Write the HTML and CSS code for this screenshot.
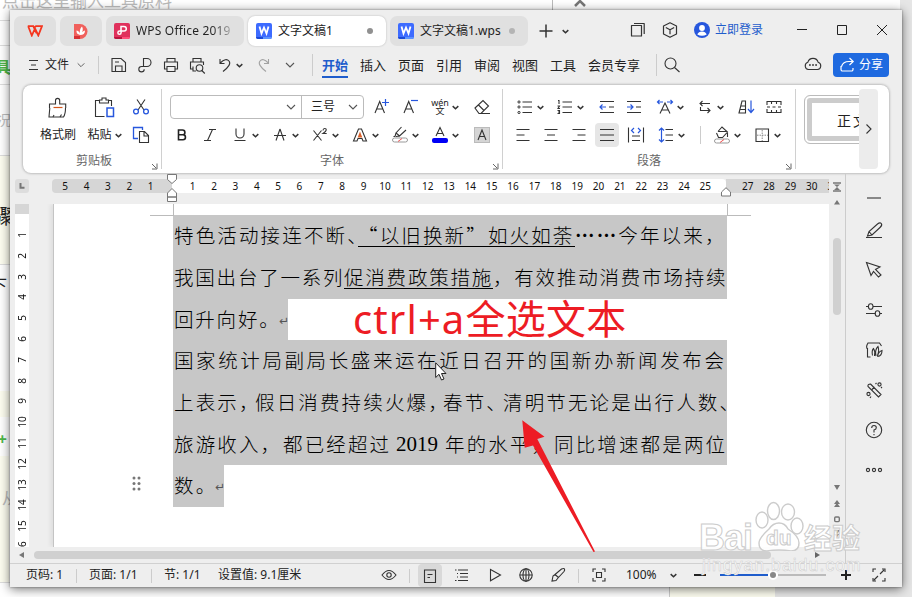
FILE: index.html
```html
<!DOCTYPE html>
<html lang="zh-CN">
<head>
<meta charset="utf-8">
<title>文字文稿1</title>
<link rel="stylesheet" href="styles.css">
</head>
<body>
<svg class="defs" aria-hidden="true">
  <symbol id="chev" viewBox="0 0 8 8"><path d="M1.500 2.800 4 5.200l2.500-2.400" fill="none" stroke="#333" stroke-width="1.300"/></symbol>
  <symbol id="thin" viewBox="0 0 12 12"><path d="M2 4l4 4 4-4" fill="none" stroke="#555" stroke-width="1.100"/></symbol>
  <symbol id="corner" viewBox="0 0 8 8"><path d="M1 2l4 4M6 1.500V7H1" fill="none" stroke="#666"/></symbol>
  <symbol id="wdoc" viewBox="0 0 16 16"><rect width="16" height="16" rx="2" fill="#3d6bff"/><path d="M0 14h7v2H2a2 2 0 0 1-2-2z" fill="#1a49d6"/><path d="M7 14h9a2 2 0 0 1-2 2H7z" fill="#5b93ff"/><path d="M3.500 3.500 5.500 10.500 8 4.500 10.500 10.500 12.500 3.500" fill="none" stroke="#fff" stroke-width="1.800"/></symbol>
</svg>

<div class="backdrop">
  <div class="bd-title">点击这里输入工具原料</div>
  <div class="bd-cream a"></div><div class="bd-cream b"></div><div class="bd-cream c"></div>
  <div class="bd-rule r1"></div><div class="bd-rule r2"></div><div class="bd-rule r3"></div><div class="bd-rule r4"></div><div class="bd-rule r5"></div><div class="bd-rule r6"></div>
  <div class="bd-text t1">工具</div><div class="bd-text t2">情况</div><div class="bd-text t3">步骤</div><div class="bd-text t4">按下</div><div class="bd-text t5">+</div><div class="bd-text t6">从</div>
  <div class="bd-top"></div><svg class="bd-up" viewBox="0 0 12 8"><path d="M1 7 6 2l5 5" fill="none" stroke="#777" stroke-width="2.500"/></svg>
  <div class="bd-side"></div><div class="bd-foot"></div><div class="bd-cream d"></div>
</div>

<main class="window">
  <header class="titlebar">
    <div class="tab small"><svg width="16" height="12" viewBox="0 0 16 12"><path d="M.8 1.200h5.500L9.500 8M1.200 1.200 4.800 10.500 8 3.500M6.500 3.500 9 1.200h6L11.300 10.500 8 3.500" fill="none" stroke="#f4361f" stroke-width="1.800"/></svg></div>
    <div class="tab small"><svg width="16" height="17" viewBox="0 0 16 17"><path d="M1 1h6a7.500 7.500 0 0 1 0 15H1z" fill="#f0605c"/><path d="M1 13h6v3H1z" fill="#d62f33"/><path d="M7 12Q3 11 3.500 7.500 7 8 7 12Q6 6 9 3.500 11 7 8 12 9 8 12 7.500 12 12 7 12" fill="#fff"/></svg></div>
    <div class="tab wide"><svg width="16" height="16" viewBox="0 0 16 16"><rect width="16" height="16" rx="2" fill="#e0315c"/><path d="M0 14h8v2H2a2 2 0 0 1-2-2z" fill="#b9153f"/><path d="M8 14h8a2 2 0 0 1-2 2H8z" fill="#ff4f7a"/><path d="M7 8V3.500h3a2.300 2.300 0 0 1 0 4.600H5.500a1.600 1.600 0 1 0 1.600 1.700V8" fill="none" stroke="#fff" stroke-width="1.500"/></svg><span class="fade">WPS Office 2019</span></div>
    <div class="tab wide current"><svg width="16" height="16"><use href="#wdoc"/></svg><span>文字文稿1</span><i class="dot"></i></div>
    <div class="tab wide"><svg width="16" height="16"><use href="#wdoc"/></svg><span>文字文稿1.wps</span><i class="dot pale"></i></div>
    <svg class="plus" width="14" height="14" viewBox="0 0 14 14"><path d="M7 .5v13M.5 7h13" stroke="#333" stroke-width="1.500"/></svg>
    <svg class="ch" width="9" height="9"><use href="#chev"/></svg>
    <div class="win-tools">
      <svg width="16" height="16" viewBox="0 0 16 16"><path d="M1.500 3.500h10v10.500h-10zM4 1.500h10.200V12" fill="none" stroke="#333" stroke-width="1.200" stroke-linejoin="round"/></svg>
      <svg width="16" height="16" viewBox="0 0 16 16"><path d="M8 .8 14.500 4v8L8 15.300 1.500 12V4zM3.800 5.500 8 7.700l4.200-2.200M8 7.700v4.500" fill="none" stroke="#333" stroke-width="1.200" stroke-linejoin="round"/></svg>
      <div class="login"><svg width="16" height="16" viewBox="0 0 16 16"><circle cx="8" cy="8" r="8" fill="#2757dd"/><circle cx="8" cy="6" r="2.900" fill="#fff"/><path d="M3.300 12.500Q4.500 9.500 8 9.500t4.700 3Q8 15 3.300 12.500" fill="#fff"/></svg><span>立即登录</span></div>
      <svg width="12" height="12" viewBox="0 0 12 12"><path d="M1 5.500h10" stroke="#222" stroke-width="1"/></svg>
      <svg width="12" height="12" viewBox="0 0 12 12"><path d="M1.500 1.500h9v9h-9z" fill="none" stroke="#222"/></svg>
      <svg width="12" height="12" viewBox="0 0 12 12"><path d="M1 1l10 10M11 1 1 11" stroke="#222"/></svg>
    </div>
  </header>

  <nav class="menubar">
    <div class="file"><svg width="10" height="12" viewBox="0 0 10 12"><path d="M0 1.500h9M2 6h5M0 10.500h9" stroke="#333" stroke-width="1.100"/></svg><span>文件</span><svg width="10" height="10"><use href="#thin"/></svg></div>
    <div class="quick">
      <svg width="20" height="20" viewBox="0 0 20 20"><path d="M3 3.500h9l4.500 4V16.500H3zM6 7h4M6.500 16v-5h6.500v5" class="ln"/></svg>
      <svg width="20" height="20" viewBox="0 0 20 20"><path d="M8.500 12V3.500h3.500a4 4 0 0 1 0 8H6.500a2.700 2.700 0 1 0 2.700 2.700" class="ln"/></svg>
      <svg width="20" height="20" viewBox="0 0 20 20"><path d="M6 7V3.500h8V7M6 14H3.500V7h13v7H14M6 11.500h8V16.500H6z" class="ln"/></svg>
      <svg width="20" height="20" viewBox="0 0 20 20"><path d="M6 7V3.500h8V7M5.500 14H3.500V7h13v3M6 11.500V16h3M14.800 15.500l3 3" class="ln"/><circle cx="12.500" cy="13" r="3.300" class="ln"/></svg>
      <svg class="undo" width="20" height="20" viewBox="0 0 20 20"><path d="M5 4v4.500h4.500M5.200 8Q11 2.500 14 6t-6 10.500" class="ln"/></svg>
      <svg width="9" height="9"><use href="#chev"/></svg>
      <svg class="redo" width="20" height="20" viewBox="0 0 20 20"><path d="M14.500 4v4.500H10M14.300 8Q9 2.500 6 6t6 10.500" class="ln"/></svg>
      <svg width="12" height="12"><use href="#thin"/></svg>
    </div>
    <div class="menus"><span class="on">开始</span><span>插入</span><span>页面</span><span>引用</span><span>审阅</span><span>视图</span><span>工具</span><span>会员专享</span></div>
    <svg class="search" width="18" height="18" viewBox="0 0 18 18"><circle cx="7.500" cy="7.500" r="5.500" class="ln"/><path d="M11.500 11.500 16.500 16" class="ln"/></svg>
    <svg class="cloud" width="18" height="16" viewBox="0 0 18 16"><path d="M4.500 13.500a3.700 3.700 0 0 1-.7-7.200 5.400 5.400 0 0 1 10.400 0 3.700 3.700 0 0 1-.7 7.200z" class="ln"/><path d="M5 9h1.800M8.100 9h1.800M11.200 9H13" stroke="#333" stroke-width="1.600"/></svg>
    <div class="share"><svg width="16" height="16" viewBox="0 0 16 16"><path d="M2 9v3.500a1.500 1.500 0 0 0 1.500 1.500h9a1.500 1.500 0 0 0 1.500-1.500V11M2.500 9.500Q4 4.500 10 4.500h4M10.500 1l3.700 3.500-3.700 3.500" fill="none" stroke="#fff" stroke-width="1.200"/></svg><span>分享</span></div>
  </nav>

  <section class="ribbon">
    <div class="group clip">
      <div class="clip-body">
        <div class="big"><svg width="24" height="24" viewBox="0 0 24 24"><path d="M3.500 12V8h6V4.500a2 2 0 0 1 4.200 0V8h6v4M3.800 12 3 21h14.500q2-3 2-9" class="ln"/><path d="M7.500 11.500h9" stroke="#d3571d" stroke-width="1.200"/><path d="M7 21l1-2M14 21l1.500-2.500" class="ln"/></svg><span>格式刷</span></div>
        <div class="big"><svg width="24" height="24" viewBox="0 0 24 24"><path d="M7 4.500H2.500v16h9M15 4.500h3.500V10M6.500 4h2.500V2h4v2h2.500v3h-9z" class="ln"/><path d="M14 12h6.500v8.500H14z" fill="none" stroke="#2757dd" stroke-width="1.500"/></svg><span>粘贴<svg width="9" height="9"><use href="#chev"/></svg></span></div>
        <div class="stack">
          <svg width="18" height="18" viewBox="0 0 18 18"><path d="M5 1.500l7 10.500M13 1.500 6 12" class="ln"/><g fill="none" stroke="#2757dd" stroke-width="1.300"><circle cx="4" cy="13.500" r="2.400"/><circle cx="14" cy="13.500" r="2.400"/></g></svg>
          <svg width="18" height="18" viewBox="0 0 18 18"><path d="M6 12.500H1.500V1.500h9V4" fill="none" stroke="#2757dd" stroke-width="1.300"/><path d="M7.500 5.500h5l4 4v7h-9zM12 5.500V10h4.500" class="ln"/></svg>
        </div>
      </div>
      <div class="label">剪贴板<svg width="8" height="8"><use href="#corner"/></svg></div>
    </div>

    <div class="group font">
      <div class="row">
        <div class="combo"><div class="name"><svg width="12" height="12"><use href="#thin"/></svg></div><div class="size">三号<svg width="12" height="12"><use href="#thin"/></svg></div></div>
        <svg class="i ml6" viewBox="0 0 24 24"><path d="M5 18 9.700 6.500 14.500 18M6.500 14h6.500" class="ln"/><path d="M15.500 4v7M12 7.500h7" class="bl"/></svg>
        <svg class="i ml5" viewBox="0 0 24 24"><path d="M5 18 9.700 6.500 14.500 18M6.500 14h6.500" class="ln"/><path d="M12 5.500h7" class="bl"/></svg>
        <div class="split ml5"><span class="wen"><b>wén</b><b>文</b></span><svg class="c"><use href="#chev"/></svg></div>
        <svg class="i ml10" viewBox="0 0 24 24"><path d="M5 13 13 5.500l5.500 5.500-7.500 7.500H9zM8.500 10l5.500 5.500M9 18.500h11" class="ln"/></svg>
      </div>
      <div class="row">
        <svg class="i" viewBox="0 0 24 24"><path d="M8.500 7h4a2.400 2.400 0 0 1 0 4.800H8.500zM8.500 11.800h4.500a2.400 2.400 0 0 1 0 4.900H8.500z" fill="none" stroke="#222" stroke-width="1.600"/></svg>
        <svg class="i ml4" viewBox="0 0 24 24"><path d="M11 6.500h7M6 17.500h7M14.500 6.500 9.500 17.500" class="ln"/></svg>
        <div class="split ml6"><svg class="i" viewBox="0 0 24 24"><path d="M8 5.500v5.500a4 4 0 0 0 8 0V5.500M6.500 17.500h11" class="ln"/></svg><svg class="c"><use href="#chev"/></svg></div>
        <div class="split ml8"><svg class="i" viewBox="0 0 24 24"><path d="M12 6 8 17.500M12 6l4 11.500M6 12.500h12" class="ln"/></svg><svg class="c"><use href="#chev"/></svg></div>
        <div class="split ml8"><svg class="i" viewBox="0 0 24 24"><path d="M5.500 7.500l8 10M13.500 7.500l-8 10M15 7.500q0-2 1.700-2t1.500 1.700Q18 8.500 15 10.500h3.700" class="ln"/></svg><svg class="c"><use href="#chev"/></svg></div>
        <div class="split ml8"><svg class="i" viewBox="0 0 24 24"><path d="M5.500 18 10.500 6h3l5 12H15l-1-2.500h-4L9 18z" class="ln"/><path d="M12 8.500l2.300 6H9.700z" fill="#d9622b"/></svg><svg class="c"><use href="#chev"/></svg></div>
        <div class="split ml8"><svg class="i" viewBox="0 0 24 24"><path d="M13.500 4 8 10l3.500 3 6.500-6M8 10l-1 3.500H5.500M11.500 13 8 13.500" class="ln"/><rect x="4.500" y="15" width="15" height="4" rx="2" fill="#fff" stroke="#999"/><path d="M10 18.500l4-3" stroke="#e55"/></svg><svg class="c"><use href="#chev"/></svg></div>
        <div class="split ml8"><svg class="i" viewBox="0 0 24 24"><path d="M8 13 12 4.500 16 13M9.300 10.500h5.400" class="ln"/><rect x="4" y="15" width="16" height="5" rx="2" fill="#0000f5"/></svg><svg class="c"><use href="#chev"/></svg></div>
        <svg class="i ml10" viewBox="0 0 24 24"><rect x="4.500" y="4.500" width="15" height="15" fill="#d5d5d5" stroke="#bbb"/><path d="M8 17l4-10 4 10M9.300 13.500h5.400" class="ln"/></svg>
      </div>
      <div class="label">字体<svg width="8" height="8"><use href="#corner"/></svg></div>
    </div>

    <div class="group para">
      <div class="row r1">
        <div class="split"><svg class="i" viewBox="0 0 24 24"><path d="M9.500 7h9.500M9.500 12h9.500M9.500 17.500h9.500" class="ln"/><g fill="none" stroke="#333"><circle cx="6" cy="7" r="1.100"/><circle cx="6" cy="12" r="1.100"/><circle cx="6" cy="17.500" r="1.100"/></g></svg><svg class="c"><use href="#chev"/></svg></div>
        <div class="split ml8"><svg class="i" viewBox="0 0 24 24"><path d="M9.500 7h9.500M9.500 12h9.500M9.500 17.500h9.500M5 5.500h1V9M4.500 11h2l-1.500 2.500h2M4.500 15.500H6.500v3h-2M5 17h1.500" class="ln"/></svg><svg class="c"><use href="#chev"/></svg></div>
        <svg class="i ml10" viewBox="0 0 24 24"><path d="M5 6.500h14M14 12h5M5 17.500h14" class="ln"/><path d="M11 12H5M7.500 9.500 5 12l2.500 2.500" class="bl"/></svg>
        <svg class="i ml3" viewBox="0 0 24 24"><path d="M5 6.500h14M14 12h5M5 17.500h14" class="ln"/><path d="M5 12h6M8.500 9.500 11 12l-2.500 2.500" class="bl"/></svg>
        <div class="split ml7"><svg class="i" viewBox="0 0 24 24"><path d="M7 18.500 12 8l5 10.500M8.500 15h7" class="ln"/><path d="M4.500 7H10M14 7h5.500M6.500 5l-2 2 2 2M17.500 5l2 2-2 2" class="bl"/></svg><svg class="c"><use href="#chev"/></svg></div>
        <div class="split ml8"><svg class="i" viewBox="0 0 24 24"><path d="M17 8.500H7M9.500 6 7 8.500 9.500 11M7.500 12v3.500H17M14.500 13l2.500 2.500-2.500 2.500" class="ln"/></svg><svg class="c"><use href="#chev"/></svg></div>
        <svg class="i ml10" viewBox="0 0 24 24"><path d="M4 18 7 6h3.500v12zM6 11h4M5.500 14.500H10" class="ln"/><path d="M16 5.500V17M13 14l3 3.500 3-3.500" class="bl"/></svg>
        <svg class="i ml3" viewBox="0 0 24 24"><path d="M5 10V6.500h14V10M5 14v3.500h14V14M9.500 6.500V9M14.500 6.500V9M9.500 15v2.500M14.500 15v2.500M5 12h3M10.500 12h3M16 12h3" class="ln"/></svg>
      </div>
      <div class="row r2">
        <svg class="i" viewBox="0 0 24 24"><path d="M5.500 6.500h13M5.500 12h8M5.500 17.500h13" class="ln"/></svg>
        <svg class="i ml4" viewBox="0 0 24 24"><path d="M5.500 6.500h13M8 12h8M5.500 17.500h13" class="ln"/></svg>
        <svg class="i ml4" viewBox="0 0 24 24"><path d="M5.500 6.500h13M10.500 12h8M5.500 17.500h13" class="ln"/></svg>
        <svg class="i ml4 pressed" viewBox="0 0 24 24"><path d="M5 6.500h14M5 12h14M5 17.500h14" class="ln"/></svg>
        <svg class="i ml5" viewBox="0 0 24 24"><path d="M4.500 4.500v15M19.500 4.500v15M8 13h8M8 17.500h8" class="ln"/><path d="M10 5 7.500 7.500 10 10M14 5l2.500 2.500L14 10" class="bl"/></svg>
        <div class="split ml6"><svg class="i" viewBox="0 0 24 24"><path d="M11.500 6.500H19M11.500 12H19M11.500 17.500H19" class="ln"/><path d="M7.500 5v14M5 7.500 7.500 5 10 7.500M5 16.500 7.500 19l2.500-2.500" class="bl"/></svg><svg class="c"><use href="#chev"/></svg></div>
        <i class="vsep"></i>
        <div class="split ml9"><svg class="i" viewBox="0 0 24 24"><path d="M8 8.500 12 4l5.500 5-5 5.500H8.500L6.500 10M8 8.500h9M17.500 10v4" class="ln"/><rect x="4.500" y="16" width="15" height="4" rx="2" fill="#fff" stroke="#999"/><path d="M10 19.500l4-3" stroke="#e55"/></svg><svg class="c"><use href="#chev"/></svg></div>
        <div class="split ml8"><svg class="i" viewBox="0 0 24 24"><path d="M6 6h12.500v12.500H6z" class="ln"/><path d="M12.200 7v11M7 12.200h11" stroke="#888" stroke-dasharray="1.500 1"/></svg><svg class="c"><use href="#chev"/></svg></div>
      </div>
      <div class="label">段落<svg width="8" height="8"><use href="#corner"/></svg></div>
    </div>

    <div class="styles"><div class="clipper"><div class="card">正文</div></div><div class="more"><svg width="8" height="12" viewBox="0 0 8 12"><path d="M1.500 1.500 6 6 1.500 10.500" class="ln"/></svg></div></div>
  </section>

  <section class="work">
    <div class="editor">
      <div class="hruler">
        <span class="tabsel"><svg width="14" height="14" viewBox="0 0 14 14"><path d="M5.500 4v4.800h4" fill="none" stroke="#777" stroke-width="2"/></svg></span>
        <div class="hr-left"><b>5</b><b>4</b><b>3</b><b>2</b><b>1</b></div>
        <div class="hr-mid"><b>1</b><b>2</b><b>3</b><b>4</b><b>5</b><b>6</b><b>7</b><b>8</b><b>9</b><b>10</b><b>11</b><b>12</b><b>13</b><b>14</b><b>15</b><b>16</b><b>17</b><b>18</b><b>19</b><b>20</b><b>21</b><b>22</b><b>23</b><b>24</b><b>25</b></div>
        <div class="hr-right"><b>27</b><b>28</b><b>29</b><b>30</b><b>31</b></div>
        <svg class="split-mark" width="8" height="10" viewBox="0 0 8 10"><path d="M0 1h8M0 9h8" stroke="#777" stroke-width="1.400"/><path d="M1 2.500h6L4 5zM1 8l3-3 3 3z" fill="#777"/></svg>
        <svg class="indent-l" width="12" height="30" viewBox="0 0 12 30"><path d="M1.500.5h9v5L6 9.500l-4.500-4zM1.500 19 6 14.500l4.500 4.500v4h-9zM1.500 23h9v4.500h-9z" fill="#fff" stroke="#777"/></svg>
        <svg class="indent-r" width="12" height="10" viewBox="0 0 12 10"><path d="M1.500 5 6 .7 10.500 5v4h-9z" fill="#fff" stroke="#777"/></svg>
      </div>
      <div class="docrow">
        <div class="vruler"><b>1</b><b>2</b><b>3</b><b>4</b><b>5</b><b>6</b><b>7</b><b>8</b><b>9</b><b>10</b><b>11</b><b>12</b><b>13</b><b>14</b><b>15</b><b>16</b></div>
        <article class="page">
          <i class="mark ml"></i><i class="mark mr"></i>
          <div class="line"><span class="w185">特色活动接连不断、</span><u class="w217">“以旧换新”如火如荼</u><span><strong>……</strong>今年以来，</span></div>
          <div class="line tight"><span class="w171">我国出台了一系列</span><u class="w149">促消费政策措施</u><span>，有效推动消费市场持续</span></div>
          <div class="line tight short l3"><span class="w107">回升向好。</span><i class="ret">↵</i></div>
          <div class="line loose">国家统计局副局长盛来运在近日召开的国新办新闻发布会</div>
          <div class="line"><span class="w82">上表示，</span><span class="w188">假日消费持续火爆，</span><span class="w60">春节、</span><span>清明节无论是出行人数、</span></div>
          <div class="line l6"><span class="w109">旅游收入，</span><span class="w114">都已经超过</span><em>2019</em><span class="w109">年的水平，</span><span>同比增速都是两位</span></div>
          <div class="line short l7"><span class="w43">数。</span><i class="ret">↵</i></div>
          <svg class="grip" width="10" height="16" viewBox="0 0 10 16"><g fill="#777"><circle cx="2" cy="2" r="1.500"/><circle cx="7" cy="2" r="1.500"/><circle cx="2" cy="7.500" r="1.500"/><circle cx="7" cy="7.500" r="1.500"/><circle cx="2" cy="13" r="1.500"/><circle cx="7" cy="13" r="1.500"/></g></svg>
        </article>
        <div class="vscroll">
          <svg width="6" height="5" viewBox="0 0 6 5"><path d="M3 0 6 4.500H0z" fill="#777"/></svg>
          <div class="thumb"></div>
          <svg class="nav" width="8" height="54" viewBox="0 0 8 54"><g fill="#777"><path d="M1 1h6L4 6zM4 16 7 20H1zM4 19 7 23H1zM1 50h6v-1L4 53zM1 46h6l-3 4z"/></g><rect x="1.700" y="33" width="4.600" height="4.600" rx="1" fill="none" stroke="#777" stroke-width="1.400"/></svg>
        </div>
      </div>
      <div class="hscroll"><svg width="5" height="6" viewBox="0 0 5 6"><path d="M0 3 5 0v6z" fill="#777"/></svg><div class="hthumb"></div><svg width="5" height="6" viewBox="0 0 5 6"><path d="M5 3 0 0v6z" fill="#666"/></svg></div>
    </div>
    <aside class="side">
      <svg width="20" height="10" viewBox="0 0 20 10"><path d="M3 5h14" stroke="#888" stroke-width="2"/></svg>
      <svg viewBox="0 0 20 20"><path d="M2 17.500h16M3.500 16l1.500-4.500L13.500 4Q16 2 17.300 3.500T16 7.500L8 15zM5 11.500l3 3.500" class="ln"/></svg>
      <svg viewBox="0 0 20 20"><path d="M2.500 2.500 16 7l-4.500 2.500 5.500 5.500-2.500 2-5-5.500L7 15.500z" class="ln"/></svg>
      <svg viewBox="0 0 20 20"><path d="M2 6.500h2.500M9 6.500h9M2 13.500h9.500M16 13.500h2" class="ln"/><ellipse cx="6.700" cy="6.500" rx="2.300" ry="2.800" class="ln"/><ellipse cx="13.500" cy="13.500" rx="2.300" ry="2.800" class="ln"/></svg>
      <svg viewBox="0 0 20 20"><path d="M3.500 8v9h3M3.500 9Q1.500 7 4 3h11.500l2 3" class="ln"/><path d="M8.500 15.500Q7.500 10.500 9.500 8.500q2 3 1 7.500M12 16Q10.500 10 14 6.500q1.500 4-.5 9M13.500 16.500Q14 12 18 10.500q0 5.500-4.500 6" class="ln"/></svg>
      <svg viewBox="0 0 20 20"><path d="M6.500 4 17 14.500 14.500 17 4 6.500q-.5-2.500 2.500-2.500zM8 9.500 10.500 7" class="ln"/><circle cx="15.500" cy="4.500" r="1.600" class="ln"/><circle cx="4.500" cy="14" r="1.600" class="ln"/><path d="M11.500 4l1-1M17 8l1-1M7 16.500l-1 1.500" class="ln"/></svg>
      <svg viewBox="0 0 20 20"><circle cx="10" cy="10" r="7.700" class="ln"/><path d="M7.700 8q0-2.500 2.300-2.500t2.300 2.200Q12.300 9.500 10 10v2.500M10 14v1.300" class="ln"/></svg>
      <svg viewBox="0 0 20 20"><g class="ln"><circle cx="4" cy="10" r="1.600"/><circle cx="10" cy="10" r="1.600"/><circle cx="16" cy="10" r="1.600"/></g></svg>
    </aside>
  </section>

  <footer class="status">
    <span>页码: 1</span><i></i><span>页面: 1/1</span><i></i><span>节: 1/1</span><span>设置值: 9.1厘米</span>
    <svg class="m" viewBox="0 0 20 20"><path d="M3 10q7-9 14 0-7 9-14 0z" class="ln"/><circle cx="10" cy="10" r="2.200" class="ln"/></svg>
    <i class="m"></i>
    <div class="view m"><svg viewBox="0 0 20 20"><path d="M4.500 4h11v12.500h-11zM7.500 8.500h5M7.500 11.500H10" class="ln"/></svg></div>
    <svg class="m" viewBox="0 0 20 20"><path d="M7 5h10M9 8.500h8M9 12h8M7 15.500h10M4 5h1.500M4 15.500h1.500M6 8.500h1M6 12h1" class="ln"/></svg>
    <svg class="m" viewBox="0 0 20 20"><path d="M5.500 4.500 15.500 10l-10 5.800z" class="ln"/></svg>
    <svg class="m" viewBox="0 0 20 20"><circle cx="10" cy="10" r="6.200" class="ln"/><ellipse cx="10" cy="10" rx="3" ry="6.200" class="ln"/><path d="M3.800 10h12.400M10 3.800v12.400" class="ln"/></svg>
    <svg class="m" viewBox="0 0 20 20"><path d="M4 16l1-5 2-1.500L13.500 4q2.500-1 3 0T16 6.500L10 13l-2 2.500zM7 9.500l3.500 3" class="ln"/></svg>
    <i class="m"></i>
    <svg class="m" viewBox="0 0 20 20"><path d="M4 7V4h3M13 4h3v3M16 13v3h-3M7 16H4v-3M7.500 7.500h5v5h-5z" class="ln"/></svg>
    <b></b><span>100%</span>
    <svg class="m ch" viewBox="0 0 8 8"><use href="#chev"/></svg>
    <svg class="m" viewBox="0 0 20 20"><path d="M4 10h12" stroke="#222" stroke-width="2"/></svg>
    <b></b>
    <div class="slider"><div class="fill"></div><div class="knob"></div><div class="rest"></div></div>
    <svg class="m" viewBox="0 0 20 20"><path d="M10 5v10M5 10h10" stroke="#222" stroke-width="2"/></svg>
    <svg class="m" viewBox="0 0 20 20"><path d="M4 7V4h3M16 13v3h-3M4 13v3h3M13 4h3v3M5 15l4-4M15 5l-4 4" class="ln"/></svg>
  </footer>
</main>

<div class="note">ctrl+a<span>全选文本</span></div>
<svg class="arrow" width="76" height="136" viewBox="520 418 76 136"><path d="M522.300 420.300 544.500 436.700 537.300 439 595 551.500 593.500 552 533 445.500 524.700 447.700z" fill="#ed1c24"/></svg>
<svg class="cursor" width="14" height="20" viewBox="0 0 14 20"><path d="M.7.800V15.500L4 12.300 6.500 18 9 17 6.500 11.500H11z" fill="#fff" stroke="#222"/></svg>
<div class="mark-paw"><svg width="52" height="52" viewBox="0 0 52 52"><g fill="#fff" fill-opacity=".85" stroke="#ccc" stroke-width="1.400"><ellipse cx="8" cy="21" rx="6" ry="8"/><ellipse cx="19.500" cy="12" rx="6" ry="8.500"/><ellipse cx="34" cy="13" rx="6.500" ry="8"/><ellipse cx="43" cy="27" rx="6" ry="8"/><path d="M25 24q6 0 9 6 11 7 11 14 0 8-8 8-12-2-24 0-8 0-8-8 0-5 10-14 4-6 10-6z"/></g></svg></div>
<div class="wm bai">Bai</div><div class="wm du">du</div><div class="wm jy">经验</div><div class="wm url">jingyan.baidu.com</div>
</body>
</html>
```
FILE: styles.css
```css
* { box-sizing: border-box; }
body { margin: 0; width: 912px; height: 597px; overflow: hidden; position: relative; background: #fff; color: #222; font: 12px/16px "Noto Sans", "Noto Sans CJK SC", sans-serif; }
svg { display: block; flex: none; }
i { font-style: normal; }
.defs { position: absolute; width: 0; height: 0; }
.ln { fill: none; stroke: #333; stroke-width: 1.1; }
.bl { fill: none; stroke: #2757dd; stroke-width: 1.2; }

/* page behind the window */
.backdrop { position: absolute; inset: 0; overflow: hidden; }
.backdrop > * { position: absolute; }
.bd-title { left: 2px; top: -10px; font-size: 17px; line-height: 22px; color: #bbb; white-space: nowrap; }
.bd-cream { left: 0; width: 12px; background: #fdfdf0; }
.bd-cream.a { top: 156px; height: 108px; }
.bd-cream.b { top: 391px; height: 26px; }
.bd-cream.c { top: 456px; height: 126px; }
.bd-cream.d { left: 669px; top: 580px; width: 106px; height: 17px; border-left: 1px solid #ccc; }
.bd-rule { left: 0; width: 12px; height: 1px; background: #ddd; }
.bd-rule.r1 { top: 20px; } .bd-rule.r2 { top: 45px; } .bd-rule.r3 { top: 84px; } .bd-rule.r4 { top: 155px; } .bd-rule.r5 { top: 264px; } .bd-rule.r6 { top: 582px; }
.bd-text { right: 901px; white-space: nowrap; font-size: 16px; line-height: 20px; }
.t1 { top: 57px; color: #4db648; font-weight: 700; }
.t2 { top: 110px; color: #bbb; font-size: 14px; }
.t3 { top: 207px; font-size: 20px; right: 899px; }
.t4 { top: 275px; right: 905px; }
.t5 { top: 429px; color: #4db648; right: 905px; font-weight: 700; }
.t6 { top: 488px; color: #bbb; right: 894px; }
.bd-top { left: 552px; top: 0; width: 1px; height: 12px; background: #bbb; }
.bd-up { left: 574px; top: -1px; width: 12px; height: 8px; }
.bd-side { right: 0; top: 0; width: 12px; height: 597px; background: #e6e6e6; }
.bd-foot { right: 0; top: 580px; width: 137px; height: 17px; background: #e6e6e6; }

.window { position: relative; margin: 10px; width: 892px; height: 577px; display: flex; flex-direction: column; background: #eee; box-shadow: 0 2px 10px rgba(0,0,0,.55), 0 0 2px rgba(0,0,0,.4); }

.titlebar { height: 41px; padding: 6px 0 0 4px; display: flex; align-items: flex-start; }
.tab { height: 30px; margin-right: 4px; border-radius: 7px; background: #e0e0e0; display: flex; align-items: center; font-size: 12px; white-space: nowrap; }
.tab.small { width: 42px; justify-content: center; }
.tab.wide { width: 138px; padding-left: 8px; gap: 6px; }
.tab.current { background: #fff; box-shadow: 0 0 2px rgba(0,0,0,.25); }
.fade { letter-spacing: .18px; background: linear-gradient(90deg, #222 80%, #aaa); -webkit-background-clip: text; color: transparent; }
.dot { width: 6px; height: 6px; border-radius: 50%; background: #909090; margin-left: auto; margin-right: 13px; }
.dot.pale { background: #b4b4b4; }
.plus { margin: 8px 8px 0 7px; }
.ch { margin-top: 11px; }
.win-tools { flex: 1; display: grid; grid-template-columns: 32px 32px 96px 40px 40px 40px; justify-content: end; justify-items: center; align-items: center; height: 28px; }
.login { display: flex; align-items: center; gap: 5px; margin-left: 8px; justify-self: start; color: #1f5dcc; white-space: nowrap; }

.menubar { height: 34px; display: flex; position: relative; }
.menubar > * { margin-top: 4px; height: 22px; }
.menubar .file { display: flex; align-items: center; padding-left: 19px; width: 89px; border-right: 1px solid #ccc; height: 18px; margin-top: 5px; }
.file span { margin: 0 7px 0 6px; }
.menubar .quick { display: flex; align-items: center; width: 214px; padding-left: 10px; gap: 6px; border-right: 1px solid #ccc; margin-top: 3px; }
.quick .undo { margin-left: 2px; }
.quick .undo + svg { margin-left: -6px; }
.quick .redo { opacity: .4; margin: 0 4px 0 4px; }
.menubar .menus { display: flex; gap: 12px; padding: 0 12px 0 9px; width: 344px; border-right: 1px solid #ccc; font-size: 13px; line-height: 22px; white-space: nowrap; margin-top: 3px; }
.menus .on { color: #1f5dcc; font-weight: 700; height: 24px; border-bottom: 2px solid #1f5dcc; }
.menubar .search { margin: 5px 0 0 6px; height: 18px; }
.menubar .share { margin: 2px 13px 0 11px; width: 56px; height: 24px; border-radius: 4px; background: #1f6ae0; color: #fff; display: flex; align-items: center; padding-left: 6px; gap: 4px; }
.menubar .cloud { margin: 5px 0 0 auto; height: 16px; }

.ribbon { height: 88px; margin: 0 13px; display: flex; background: #fff; border-radius: 8px; box-shadow: 0 0 3px rgba(0,0,0,.4); }
.group { border-right: 1px solid #d0d0d0; margin: 4px 0; height: 80px; position: relative; }
.clip { width: 139px; } .font { width: 341px; } .para { width: 293px; }
.label { position: absolute; left: 0; right: 0; top: 64px; text-align: center; color: #666; }
.clip .label { left: 4px; }
.label svg { position: absolute; right: 2px; top: 9px; }
.clip-body { display: grid; grid-template-columns: 48px 46px 30px; padding-left: 11px; }
.big { display: flex; flex-direction: column; align-items: center; padding-top: 7px; gap: 7px; white-space: nowrap; }
.big span { display: flex; align-items: center; gap: 2px; }
.stack { display: flex; flex-direction: column; align-items: center; padding: 9px 4px 0 0; gap: 10px; }
.row { display: flex; align-items: center; height: 28px; }
.font { padding: 4px 0 0 8px; }
.font .row + .row { margin-left: -.5px; }
.para { padding: 4px 0 0 10px; }
.para .r2 { margin-left: -2.5px; }
.i { width: 24px; height: 24px; }
.c { width: 9px; height: 9px; }
.split { width: 32px; height: 24px; display: flex; align-items: center; flex: none; }
.split .c { margin-left: -1px; }
.ml3 { margin-left: 3px; } .ml4 { margin-left: 4px; } .ml5 { margin-left: 5px; } .ml6 { margin-left: 6px; } .ml7 { margin-left: 7px; } .ml8 { margin-left: 8px; } .ml9 { margin-left: 9px; } .ml10 { margin-left: 10px; }
.pressed { background: #e6e6e6; border-radius: 4px; }
.vsep { width: 1px; height: 18px; background: #ccc; margin-left: 14px; }
.combo { width: 194px; height: 24px; border: 1px solid #bbb; border-radius: 4px; display: flex; }
.name { width: 131px; border-right: 1px solid #bbb; display: flex; align-items: center; justify-content: flex-end; padding-right: 4px; }
.size { flex: 1; display: flex; align-items: center; justify-content: space-between; padding: 0 4px 0 9px; }
.wen { width: 24px; display: flex; flex-direction: column; align-items: center; font-size: 9px; line-height: 8px; }
.wen b { font-weight: 400; }
.styles { flex: 1; display: flex; padding: 4px 11px 4px 8px; }
.clipper { width: 55px; overflow: hidden; padding-top: 6px; }
.card { width: 100px; height: 49px; border: 1px solid #bbb; border-radius: 6px; box-shadow: inset 0 0 0 2px #fff, inset 0 0 0 7px #ccc; font: 14px/48px "Noto Sans CJK SC", sans-serif; letter-spacing: 2px; padding-left: 32px; }
.more { width: 19px; height: 80px; background: #ececec; border-radius: 4px; display: flex; align-items: center; justify-content: center; flex: none; }

.work { display: flex; height: 390px; }
.editor { width: 835px; }
.hruler { height: 31px; display: flex; padding: 6px 0 0 5px; position: relative; }
.hruler b, .vruler b { font: 400 10px/14px "Noto Sans", sans-serif; color: #111; text-align: center; flex: none; }
.tabsel { width: 14px; height: 14px; background: #ddd; border-radius: 3px; margin-right: 23px; }
.hr-left, .hr-mid, .hr-right { display: flex; height: 14px; overflow: hidden; background: #d6d6d6; }
.hr-left { width: 120px; padding-left: 2.5px; border-radius: 4px 0 0 4px; }
.hruler b { width: 21.36px; }
.hr-mid { width: 554px; background: #fff; padding-left: 10px; border-radius: 0 4px 0 0; }
.hr-right { width: 103px; padding-left: 11px; }
.split-mark { margin: 3px 0 0 4px; }
.indent-l { position: absolute; left: 156px; top: 1px; }
.indent-r { position: absolute; left: 710px; top: 14px; }
.docrow { height: 343px; display: flex; padding-left: 5px; }
.vruler { width: 14px; background: #fff; border-top: 10px solid #d6d6d6; padding-top: 11px; overflow: hidden; display: flex; flex-direction: column; margin-right: 24px; }
.vruler b { width: 14px; height: 20.8px; line-height: 14px; writing-mode: vertical-rl; transform: rotate(180deg); }
.page { position: relative; width: 776px; background: #fff; border-left: 1px solid #c4c4c4; box-shadow: -3px 0 4px rgba(0,0,0,.06); padding: 11px 0 0 119px; font-family: "Noto Sans CJK SC", sans-serif; font-size: 19.5px; font-weight: 300; color: #000; clip-path: inset(0 0 0 -8px); }
.line { width: 554px; height: 42px; line-height: 39px; background: #c7c7c7; white-space: nowrap; display: flex; letter-spacing: 2.15px; padding-left: 1px; text-spacing-trim: space-all; }
.line > * { flex: none; }
.tight { letter-spacing: 1.8px; }
.loose { letter-spacing: 2.6px; }
.l3, .l6 { height: 41px; }
.short.l3 { width: 115px; } .short.l7 { width: 51px; }
.line u { text-decoration: none; height: 32px; border-bottom: 1px solid #000; }
.line strong { font-weight: 700; }
.w185 { width: 184px; } .w217 { width: 217px; } .w171 { width: 170px; } .w149 { width: 149px; } .w107 { width: 105px; } .w82 { width: 81px; } .w188 { width: 188px; } .w60 { width: 60px; } .w109 { width: 109px; } .w114 { width: 113px; } .w43 { width: 41px; }
.line em { font: 400 21px/41px "Liberation Serif", serif; letter-spacing: 0; width: 49px; }
.ret { font: 400 12px/45px "DejaVu Sans", sans-serif; color: #555; letter-spacing: 0; }
.mark { position: absolute; top: 0; width: 24px; height: 12px; border-bottom: 1px solid #bbb; }
.mark.ml { left: 96px; border-right: 1px solid #bbb; margin: 0; }
.mark.mr { left: 673px; border-left: 1px solid #bbb; }
.grip { position: absolute; left: 78px; top: 272px; }
.vscroll { width: 16px; height: 343px; display: flex; flex-direction: column; align-items: center; margin-top: -4px; }
.thumb { width: 8px; height: 77px; border-radius: 4px; background: #d0d0d0; margin-top: 33px; }
.nav { margin-top: 169px; }
.hscroll { height: 16px; display: flex; align-items: center; padding-left: 9px; }
.hthumb { width: 737px; height: 8px; border-radius: 4px; background: #d0d0d0; margin: 0 44px 0 10px; }
.side { width: 57px; border-left: 1px solid #ccc; display: flex; flex-direction: column; align-items: center; padding-top: 20px; gap: 20px; }
.side svg { width: 20px; height: 20px; flex: none; }
.side svg:first-child { height: 10px; margin-bottom: -3px; }

.status { height: 24px; border-top: 1px solid #d0d0d0; padding-left: 16px; display: grid; grid-template-columns: 50px 13px 62px 13px 54px 159px 24px 16px 26px 36px 32px 30px 34px 7px 34px 10px 38px 18px 36px 2px 106px 40px 26px; align-items: center; white-space: nowrap; }
.status span { margin-top: -1px; }
.status > svg { margin-top: -1px; }
.status .m { justify-self: center; }
.status i { width: 1px; height: 14px; background: #ccc; }
.status svg { width: 20px; height: 20px; }
.status .ch { width: 9px; height: 9px; margin: 0; }
.view { width: 24px; height: 23px; background: #d9d9d9; border-radius: 4px; display: flex; align-items: center; justify-content: center; }
.slider { display: flex; align-items: center; margin-top: -1px; }
.fill { width: 48px; height: 2px; background: #1f5dcc; }
.knob { width: 10px; height: 10px; border: 2px solid #fff; border-radius: 50%; background: #888; }
.rest { width: 48px; height: 2px; background: #bbb; }

/* annotations over the document */
.note { position: absolute; left: 353px; top: 290px; font: 40px/54px "Noto Sans", sans-serif; color: #ed1c24; white-space: nowrap; letter-spacing: 1.1px; }
.note span { font-family: "Noto Sans CJK SC", sans-serif; letter-spacing: .3px; }
.arrow { position: absolute; left: 520px; top: 418px; }
.cursor { position: absolute; left: 435px; top: 362px; }
.mark-paw { position: absolute; left: 754px; top: 499px; }
.wm { position: absolute; white-space: nowrap; color: rgba(255,255,255,.85); -webkit-text-stroke: 1px #ccc; font-family: "Liberation Sans", sans-serif; font-weight: 700; }
.bai { left: 699px; top: 516px; font-size: 36px; line-height: 44px; letter-spacing: -1px; }
.du { left: 766px; top: 525px; font-size: 21px; line-height: 26px; }
.jy { left: 804px; top: 519px; font: 700 28px/36px "Noto Sans CJK SC", sans-serif; }
.url { left: 702px; top: 554px; font-size: 17.5px; line-height: 22px; font-weight: 400; letter-spacing: 1.1px; -webkit-text-stroke: .6px #d0d0d0; color: #fff; }
```
